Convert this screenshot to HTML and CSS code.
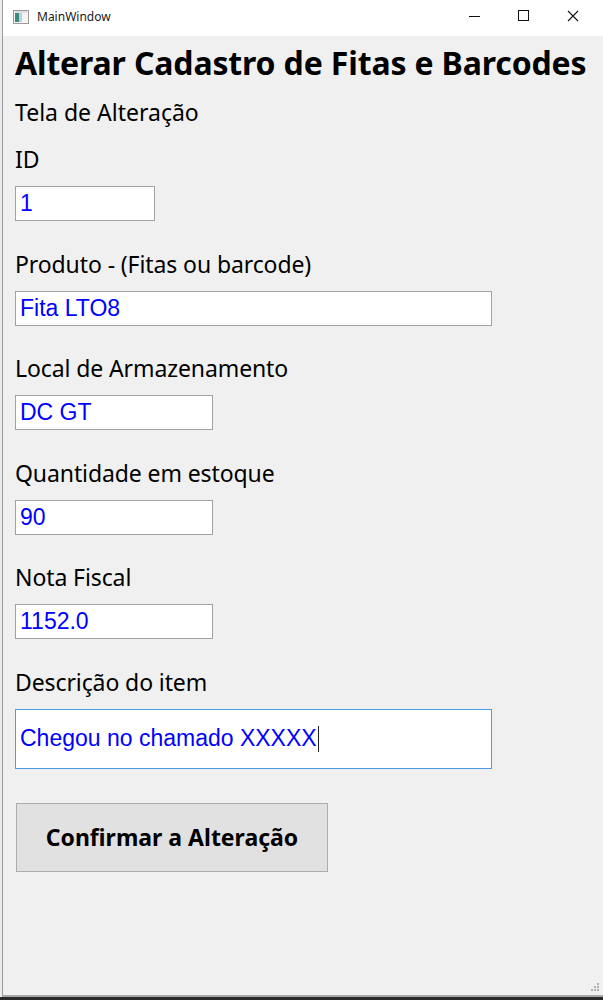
FILE: index.html
```html
<!DOCTYPE html>
<html lang="pt">
<head>
<meta charset="utf-8">
<title>MainWindow</title>
<link rel="stylesheet" href="styles.css">
</head>
<body>
<div class="desktop">
  <div class="window">
    <div class="titlebar">
      <svg class="app-icon" width="16" height="14" viewBox="0 0 16 14">
        <rect x="0.5" y="0.5" width="15" height="13" fill="#f4f4f4" stroke="#9a9a9a"/>
        <rect x="2" y="3" width="4" height="9" fill="#3c8c7c"/>
        <rect x="6" y="3" width="3" height="9" fill="#b8d0e8"/>
        <rect x="2" y="1.5" width="12" height="1" fill="#c8c8c8"/>
      </svg>
      <span class="wintitle">MainWindow</span>
      <div class="controls">
        <svg class="ctl" width="46" height="36" viewBox="0 0 46 36"><path d="M18 16.5h11" stroke="#111" stroke-width="1"/></svg>
        <svg class="ctl" width="53" height="36" viewBox="0 0 53 36"><rect x="21.5" y="10.5" width="10" height="10" fill="none" stroke="#111"/></svg>
        <svg class="ctl" width="53" height="36" viewBox="0 0 53 36"><path d="M18 11l10 10M28 11l-10 10" stroke="#111" stroke-width="1.1"/></svg>
      </div>
    </div>
    <div class="content">
      <h1 class="heading">Alterar Cadastro de Fitas e Barcodes</h1>
      <div class="subtitle">Tela de Alteração</div>
      <div class="field first">
        <label class="label">ID</label>
        <div class="input w-small">1</div>
      </div>
      <div class="field">
        <label class="label">Produto - (Fitas ou barcode)</label>
        <div class="input w-large">Fita LTO8</div>
      </div>
      <div class="field">
        <label class="label">Local de Armazenamento</label>
        <div class="input w-mid">DC GT</div>
      </div>
      <div class="field">
        <label class="label">Quantidade em estoque</label>
        <div class="input w-mid">90</div>
      </div>
      <div class="field">
        <label class="label">Nota Fiscal</label>
        <div class="input w-mid">1152.0</div>
      </div>
      <div class="field">
        <label class="label">Descrição do item</label>
        <div class="input w-large tall focus">Chegou no chamado XXXXX<span class="caret"></span></div>
      </div>
      <button class="btn">Confirmar a Alteração</button>
    </div>
    <div class="grip">
      <svg width="10" height="10" viewBox="0 0 10 10" fill="#b0b0b0">
        <rect x="7" y="0" width="2" height="2"/>
        <rect x="4" y="3" width="2" height="2"/><rect x="7" y="3" width="2" height="2"/>
        <rect x="1" y="6" width="2" height="2"/><rect x="4" y="6" width="2" height="2"/><rect x="7" y="6" width="2" height="2"/>
      </svg>
    </div>
  </div>
  <div class="taskstrip"></div>
</div>
</body>
</html>
```

FILE: styles.css
```css
html, body {
  margin: 0;
  padding: 0;
  width: 603px;
  height: 1000px;
  overflow: hidden;
  background: #ececec;
}

.desktop {
  width: 603px;
  height: 1000px;
  display: flex;
  flex-direction: column;
}

.window {
  flex: 1;
  margin-left: 2px;
  border-left: 1px solid #9c9c9c;
  border-bottom: 2px solid #a8a8a8;
  background: #f0f0f0;
  display: flex;
  flex-direction: column;
  position: relative;
}

.taskstrip {
  height: 3px;
  background: #2a2a2a;
}

.titlebar {
  height: 36px;
  background: #ffffff;
  display: flex;
  align-items: center;
  padding-left: 10px;
}

.app-icon {
  margin-top: -3px;
}

.wintitle {
  font-family: "Noto Sans", "Open Sans", sans-serif;
  font-size: 12px;
  color: #1a1a1a;
  margin-left: 8px;
  margin-top: -3px;
}

.controls {
  margin-left: auto;
  display: flex;
}

.ctl {
  display: block;
}

.content {
  flex: 1;
  padding: 5px 0 0 12px;
  display: flex;
  flex-direction: column;
  font-family: "Noto Sans", "Open Sans", sans-serif;
  color: #000;
}

.heading {
  margin: 0;
  font-size: 32px;
  font-weight: 700;
  line-height: 44px;
  letter-spacing: -0.15px;
  white-space: nowrap;
}

.subtitle {
  font-size: 23px;
  line-height: 30px;
  margin-top: 12px;
}

.field {
  display: flex;
  flex-direction: column;
}

.label {
  font-size: 23px;
  line-height: 30px;
  margin-top: 27.6px;
  margin-bottom: 12px;
  letter-spacing: -0.1px;
}

.field.first .label {
  margin-top: 17px;
}

.input {
  box-sizing: border-box;
  height: 35px;
  background: #ffffff;
  border: 1px solid #a2a2a2;
  font-family: "Liberation Sans", Arial, sans-serif;
  font-size: 23px;
  color: #0000ff;
  display: flex;
  align-items: center;
  padding-left: 4px;
}

.w-small { width: 140px; }
.w-mid { width: 198px; }
.w-large { width: 477px; }

.tall {
  height: 60px;
}

.focus {
  border-color: #4a9be0;
}

.caret {
  display: inline-block;
  width: 1px;
  height: 26px;
  background: #222;
  margin-left: 1px;
}

.btn {
  align-self: flex-start;
  margin-top: 34px;
  margin-left: 1px;
  width: 312px;
  height: 69px;
  background: #e1e1e1;
  border: 1px solid #adadad;
  font-family: "Noto Sans", "Open Sans", sans-serif;
  font-size: 23px;
  font-weight: 700;
  color: #000;
  padding: 0;
}

.grip {
  position: absolute;
  right: 3px;
  bottom: 2px;
  line-height: 0;
}
```
